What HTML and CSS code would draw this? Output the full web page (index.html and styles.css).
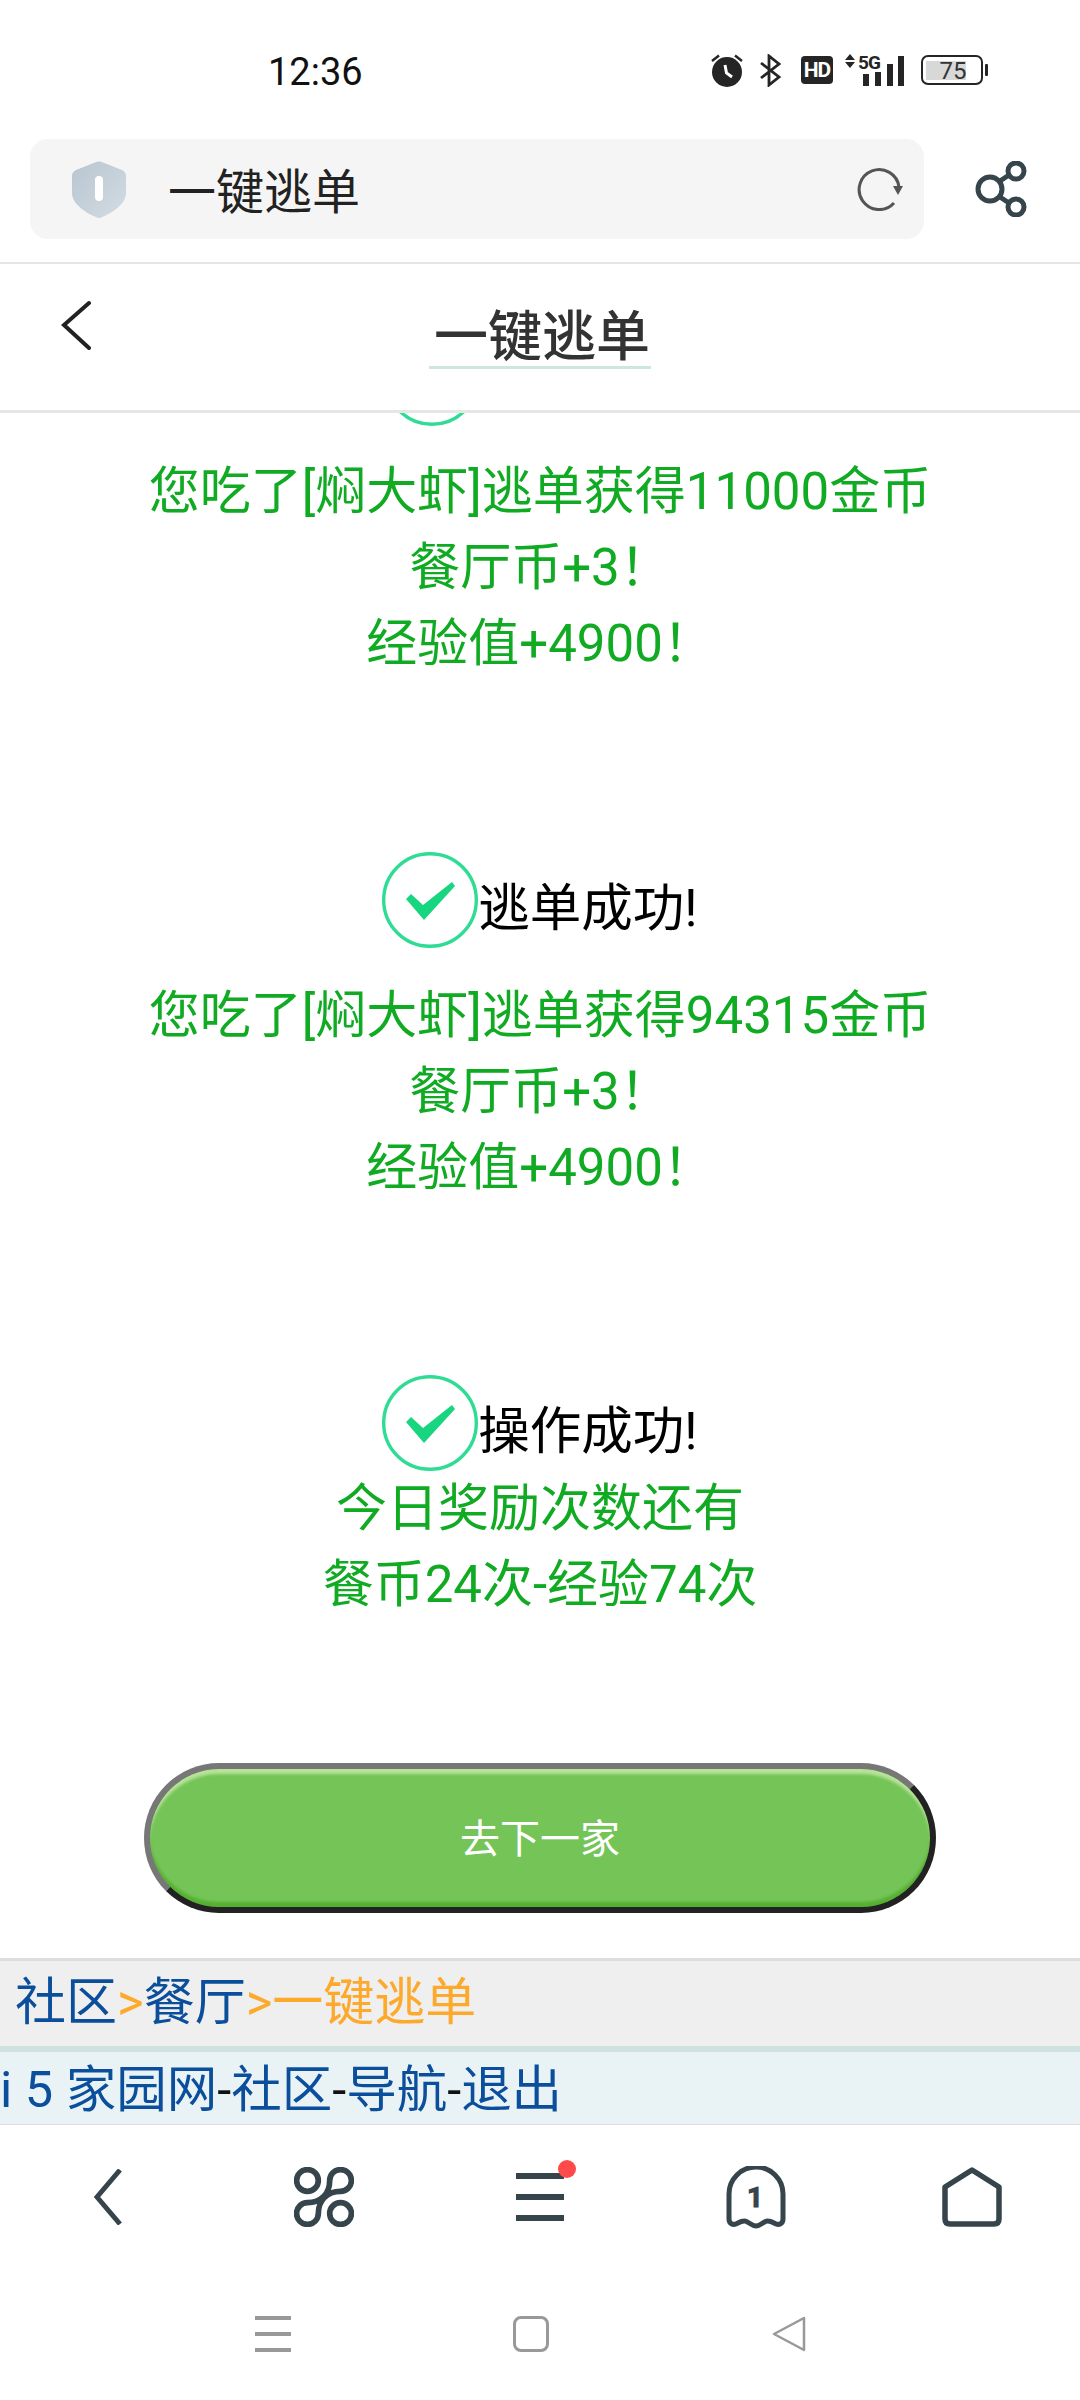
FILE: index.html
```html
<!DOCTYPE html>
<html>
    <head>
        <meta charset="UTF-8">
        <title>一键逃单</title>
        <link rel="stylesheet" href="styles.css">
    </head>
    <body>
        <div class="statusBar">
            <span class="clock">12:36</span>
            <div class="statusIcons">
                <svg class="alarmIcon" viewBox="0 0 32 33">
                    <circle cx="16" cy="18" r="15" fill="#252525"/>
                    <path d="M1 7 8 1.500M31 7 24 1.500" stroke="#252525" stroke-width="2.500" fill="none"/>
                    <path d="M14 11 15.500 19 21 23" stroke="#fff" stroke-width="3" fill="none"/>
                </svg>
                <svg class="btIcon" viewBox="0 0 22 33">
                    <path d="M1 9 19 23 9 31V2L19 10 1 24" stroke="#252525" stroke-width="2.800" fill="none"/>
                </svg>
                <span class="hdBadge">HD</span>
                <div class="signalWrap">
                    <span class="fiveG">5G</span>
                    <svg class="signalIcon" viewBox="0 0 60 32">
                        <path d="M5 0 10 6H0ZM5 14 10 8H0Z" fill="#252525"/>
                        <rect x="18" y="20" width="6" height="12" fill="#252525"/>
                        <rect x="30" y="18" width="6" height="14" fill="#252525"/>
                        <rect x="42" y="10" width="6" height="22" fill="#252525"/>
                        <rect x="53" y="2" width="6" height="30" fill="#252525"/>
                    </svg>
                </div>
                <svg class="batteryIcon" viewBox="0 0 67 30">
                    <rect x="1" y="1" width="60" height="28" rx="6" fill="none" stroke="#252525" stroke-width="2"/>
                    <rect x="5" y="6" width="40" height="19" fill="#d8d8d8"/>
                    <rect x="64" y="9" width="3" height="12" rx="1" fill="#252525"/>
                    <text x="32" y="24" class="batteryText" text-anchor="middle">75</text>
                </svg>
            </div>
        </div>

        <div class="addressRow">
            <div class="addressBar">
                <svg class="shieldIcon" viewBox="0 0 54 57">
                    <defs>
                        <linearGradient id="shieldFill" x1="0" y1="0" x2="1" y2="1">
                            <stop offset="0" stop-color="#b8c5d0"/>
                            <stop offset="1" stop-color="#d2dce3"/>
                        </linearGradient>
                    </defs>
                    <path d="M27 .5Q29 .5 31 1.500L50 9Q54 11 54 15V32C54 44 38 53 29 56.500Q27 57.500 25 56.500C16 53 0 44 0 32V15Q0 11 4 9L23 1.500Q25 .5 27 .5Z" fill="url(#shieldFill)"/>
                    <rect x="23" y="15" width="8" height="25" rx="4" fill="#fff"/>
                </svg>
                <span class="addressText">一键逃单</span>
                <svg class="reloadIcon" viewBox="0 0 46 44">
                    <path d="M42 20A20 20 0 1 0 37 36" stroke="#555" stroke-width="3" fill="none"/>
                    <path d="M36 19H46L41 28Z" fill="#555"/>
                </svg>
            </div>
            <svg class="shareIcon" viewBox="0 0 52 56">
                <g stroke="#36444c" stroke-width="5" fill="none">
                    <circle cx="15" cy="28" r="12"/>
                    <circle cx="41" cy="10" r="8"/>
                    <circle cx="41" cy="46" r="8"/>
                    <path d="M25 20 34 14M25 36 34 42"/>
                </g>
            </svg>
        </div>

        <div class="pageHeader">
            <svg class="headerBack" viewBox="0 0 32 50">
                <path d="M29 3 4 25 29 48" stroke="#222" stroke-width="4" stroke-linecap="round" fill="none"/>
            </svg>
            <h1 class="pageTitle">一键逃单</h1>
        </div>

        <div class="pageBody">
            <div class="result firstResult">
                <div class="resultHead">
                    <svg class="checkIcon" viewBox="0 0 96 96">
                        <circle cx="48" cy="48" r="46.300" stroke="#2edc93" stroke-width="3.400" fill="none"/>
                        <path d="M24 47 29 42 41 53 70 30 73 34 42 68Z" fill="#17d67f"/>
                    </svg>
                    <span class="titleSpacer"></span>
                </div>
                <div class="resultLines gapBefore">您吃了[焖大虾]逃单获得11000金币<br>餐厅币+3！<br>经验值+4900！</div>
            </div>
            <div class="result">
                <div class="resultHead">
                    <svg class="checkIcon" viewBox="0 0 96 96">
                        <circle cx="48" cy="48" r="46.300" stroke="#2edc93" stroke-width="3.400" fill="none"/>
                        <path d="M24 47 29 42 41 53 70 30 73 34 42 68Z" fill="#17d67f"/>
                    </svg>
                    <span class="resultTitle">逃单成功!</span>
                </div>
                <div class="resultLines gapBefore">您吃了[焖大虾]逃单获得94315金币<br>餐厅币+3！<br>经验值+4900！</div>
            </div>
            <div class="result">
                <div class="resultHead">
                    <svg class="checkIcon" viewBox="0 0 96 96">
                        <circle cx="48" cy="48" r="46.300" stroke="#2edc93" stroke-width="3.400" fill="none"/>
                        <path d="M24 47 29 42 41 53 70 30 73 34 42 68Z" fill="#17d67f"/>
                    </svg>
                    <span class="resultTitle">操作成功!</span>
                </div>
                <div class="resultLines">今日奖励次数还有<br>餐币24次-经验74次</div>
            </div>
            <div class="nextButton">去下一家</div>
        </div>

        <div class="crumbs">
            <span class="blue">社区</span><span class="orange">&gt;</span><span class="blue">餐厅</span><span class="orange">&gt;一键逃单</span>
        </div>
        <div class="siteFooter">
            <span class="blue">i 5 家园网</span>-<span class="blue">社区</span>-<span class="blue">导航</span>-<span class="blue">退出</span>
        </div>

        <div class="browserNav">
            <svg class="navBack" viewBox="0 0 28 56">
                <path d="M26 1 3 28 26 55" stroke="#36444c" stroke-width="5" fill="none"/>
            </svg>
            <svg class="navIcon" viewBox="0 0 58 58">
                <g stroke="#36444c" stroke-width="5.500" fill="none">
                    <circle cx="13" cy="13" r="10.500"/>
                    <circle cx="45" cy="45" r="10.500"/>
                    <path d="M34.500 13A10.500 10.500 0 1 1 45 23.500C32 23.500 23.500 32 23.500 45A10.500 10.500 0 1 1 13 34.500C26 34.500 34.500 26 34.500 13Z"/>
                </g>
            </svg>
            <div class="menuWrap">
                <span class="menuLine"></span>
                <span class="menuLine"></span>
                <span class="menuLine"></span>
                <span class="redDot"></span>
            </div>
            <svg class="navIcon ghostIcon" viewBox="0 0 60 63">
                <path d="M3 28A27 27 0 0 1 57 28V53C57 58 53 59 50 58 46 56 43 54 39.500 55.500 36 57 34 60 30 60 26 60 24 57 20.500 55.500 17 54 14 56 10 58 7 59 3 58 3 53Z" stroke="#36444c" stroke-width="5" fill="none"/>
                <text x="29" y="41" class="tabCount" text-anchor="middle">1</text>
            </svg>
            <svg class="navIcon" viewBox="0 0 60 60">
                <path d="M3 20V52Q3 57 8 57H52Q57 57 57 52V20L30 3Z" stroke="#36444c" stroke-width="5.500" stroke-linejoin="round" fill="none"/>
            </svg>
        </div>

        <div class="systemNav">
            <div class="sysMenu">
                <span class="sysLine"></span>
                <span class="sysLine"></span>
                <span class="sysLine"></span>
            </div>
            <span class="sysSquare"></span>
            <svg class="sysBack" viewBox="0 0 34 36">
                <path d="M32 2 2 18 32 34Z" stroke="#999" stroke-width="2.500" stroke-linejoin="round" fill="none"/>
            </svg>
        </div>
    </body>
</html>
```

FILE: styles.css
```css
*{
    box-sizing: border-box;
}
body{
    margin: 0;
    width: 1080px;
    height: 2400px;
    overflow: hidden;
    background-color: #FFF;
    font-family: Roboto, "Noto Sans CJK SC", sans-serif;
}
.statusBar{
    height: 139px;
    padding: 52px 92px 0 268px;
    display: flex;
    justify-content: space-between;
    align-items: flex-start;
}
.clock{
    font-size: 38px;
    line-height: 40px;
    color: #111;
}
.statusIcons{
    display: flex;
    align-items: center;
    height: 36px;
}
.alarmIcon{
    width: 32px;
    height: 33px;
    margin-right: 17px;
}
.btIcon{
    width: 22px;
    height: 33px;
    margin-right: 19px;
}
.hdBadge{
    width: 32px;
    height: 28px;
    margin-right: 12px;
    border-radius: 4px;
    background-color: #252525;
    color: #FFF;
    font-size: 21px;
    font-weight: 700;
    line-height: 28px;
    letter-spacing: -1px;
    text-align: center;
}
.signalWrap{
    position: relative;
    width: 60px;
    height: 32px;
    margin-right: 16px;
}
.signalIcon{
    width: 60px;
    height: 32px;
}
.fiveG{
    position: absolute;
    top: -1px;
    left: 13px;
    font-size: 19px;
    font-weight: 700;
    line-height: 20px;
    letter-spacing: -1px;
    color: #252525;
}
.batteryIcon{
    width: 67px;
    height: 30px;
}
.batteryText{
    font-family: Roboto, sans-serif;
    font-size: 24px;
    fill: #333;
}
.tabCount{
    font-family: Roboto, sans-serif;
    font-size: 28px;
    font-weight: 700;
    fill: #36444c;
    stroke: #36444c;
    stroke-width: 1px;
}
.addressRow{
    height: 125px;
    padding: 0 53px 23px 30px;
    display: flex;
    align-items: center;
    justify-content: space-between;
    border-bottom: 2px solid #e3e7e7;
}
.addressBar{
    width: 894px;
    height: 100px;
    padding: 0 21px 0 42px;
    display: flex;
    align-items: center;
    background-color: #f5f5f5;
    border-radius: 18px;
}
.shieldIcon{
    width: 54px;
    height: 57px;
}
.addressText{
    flex: 1;
    margin-left: 42px;
    padding-bottom: 2px;
    font-size: 48px;
    color: #222;
}
.reloadIcon{
    width: 46px;
    height: 44px;
}
.shareIcon{
    width: 52px;
    height: 56px;
}
.pageHeader{
    height: 149px;
    padding-left: 60px;
    display: flex;
    align-items: flex-start;
    border-bottom: 3px solid #e6e6e6;
}
.headerBack{
    width: 32px;
    height: 50px;
    margin-top: 36px;
}
.pageTitle{
    width: 222px;
    height: 72px;
    margin: 33px 0 0 337px;
    padding-left: 4px;
    text-align: center;
    font-size: 54px;
    line-height: 82px;
    font-weight: 500;
    white-space: nowrap;
    color: #333;
    border-bottom: 3px solid #cde7de;
}
.pageBody{
    height: 1545px;
    overflow: hidden;
    text-align: center;
}
.result{
    margin-top: 169px;
}
.firstResult{
    margin-top: -83px;
    padding-bottom: 1px;
}
.resultHead{
    height: 96px;
    display: flex;
    justify-content: center;
    align-items: center;
}
.checkIcon{
    width: 96px;
    height: 96px;
}
.resultTitle{
    margin-top: 18px;
    font-size: 51.500px;
    line-height: 60px;
    color: #000;
}
.titleSpacer{
    width: 216px;
}
.resultLines{
    font-size: 51px;
    line-height: 76px;
    color: #10ab22;
}
.gapBefore{
    margin-top: 30px;
}
.firstResult .gapBefore{
    margin-top: 28px;
}
.nextButton{
    width: 792px;
    height: 150px;
    margin: 140px auto 0;
    font-size: 40px;
    line-height: 142px;
    color: #FFF;
    background-color: #75c458;
    border: 6px solid;
    border-color: #777 #222 #222 #777;
    border-radius: 75px;
    box-shadow: inset 0 6px 3px -1px #b8e29a, inset 0 -6px 3px -1px #55b030;
}
.crumbs{
    height: 94px;
    padding: 0 15px;
    font-size: 51px;
    line-height: 84px;
    background-color: #efefef;
    border-top: 3px solid #ddd;
    border-bottom: 6px solid #cfe2df;
}
.siteFooter{
    height: 73px;
    font-size: 50.500px;
    line-height: 75px;
    color: #111;
    background-color: #e9f3f6;
    border-bottom: 1px solid #ddd;
    white-space: nowrap;
}
.blue{
    color: #0b4f9c;
}
.orange{
    color: #fda92c;
}
.browserNav{
    height: 148px;
    display: grid;
    grid-template-columns: repeat(5, 216px);
    justify-items: center;
    align-items: center;
    padding-bottom: 4px;
}
.navBack{
    width: 28px;
    height: 56px;
}
.navIcon{
    width: 60px;
    height: 60px;
}
.ghostIcon{
    height: 63px;
}
.menuWrap{
    position: relative;
    width: 48px;
    height: 48px;
    display: flex;
    flex-direction: column;
    justify-content: space-between;
}
.menuLine{
    height: 6px;
    background-color: #36444c;
}
.redDot{
    position: absolute;
    top: -13px;
    right: -12px;
    width: 18px;
    height: 18px;
    border-radius: 50%;
    background-color: #ff4a4a;
}
.systemNav{
    height: 127px;
    padding: 43px 144px 0;
    display: grid;
    grid-template-columns: repeat(3, 258px);
    justify-items: center;
    align-items: start;
}
.sysMenu{
    width: 36px;
    height: 36px;
    display: flex;
    flex-direction: column;
    justify-content: space-between;
}
.sysLine{
    height: 4px;
    background-color: #999;
}
.sysSquare{
    width: 36px;
    height: 36px;
    border: 3px solid #999;
    border-radius: 8px;
}
.sysBack{
    width: 34px;
    height: 36px;
}
```
